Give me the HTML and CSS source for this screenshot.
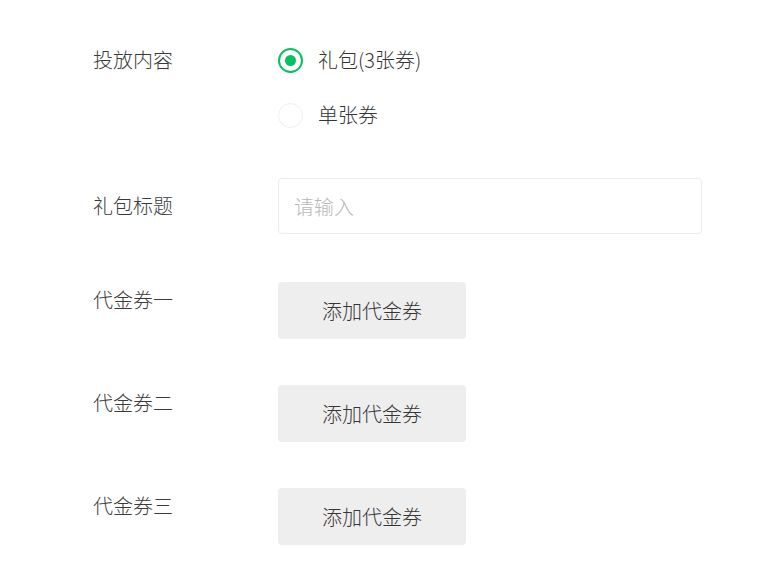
FILE: index.html
```html
<!DOCTYPE html>
<html lang="zh-CN">
<head>
<meta charset="utf-8">
<title>投放内容</title>
<link rel="stylesheet" href="styles.css">
</head>
<body>
<form class="form">
  <div class="row row-content">
    <div class="label">投放内容</div>
    <div class="control options">
      <label class="option">
        <span class="radio checked"></span>
        <span class="option-text">礼包(3张券)</span>
      </label>
      <label class="option">
        <span class="radio"></span>
        <span class="option-text">单张券</span>
      </label>
    </div>
  </div>
  <div class="row row-title">
    <div class="label">礼包标题</div>
    <div class="control">
      <div class="input"><span class="placeholder">请输入</span></div>
    </div>
  </div>
  <div class="row row-voucher">
    <div class="label label-top">代金券一</div>
    <div class="control"><div class="btn">添加代金券</div></div>
  </div>
  <div class="row row-voucher">
    <div class="label label-top">代金券二</div>
    <div class="control"><div class="btn">添加代金券</div></div>
  </div>
  <div class="row row-voucher">
    <div class="label label-top">代金券三</div>
    <div class="control"><div class="btn">添加代金券</div></div>
  </div>
</form>
</body>
</html>
```

FILE: styles.css
```css
html, body {
  margin: 0;
  padding: 0;
  background: #ffffff;
}
body {
  font-family: "Microsoft YaHei", "Noto Sans CJK SC", "Noto Sans", sans-serif;
  font-size: 20px;
  font-weight: 300;
  color: #353535;
}
.form {
  display: flex;
  flex-direction: column;
  padding: 46px 0 0 93px;
}
.row {
  display: flex;
  align-items: flex-start;
}
.label {
  width: 185px;
  flex: none;
  line-height: 28px;
  color: #3a3a3a;
}
.label-top {
  margin-top: 4px;
}
.control {
  display: flex;
}
.options {
  flex-direction: column;
  gap: 27px;
}
.option {
  display: flex;
  align-items: center;
  height: 28px;
}
.radio {
  box-sizing: border-box;
  width: 25px;
  height: 25px;
  border-radius: 50%;
  border: 1px solid #efefef;
  margin-right: 15px;
  display: flex;
  align-items: center;
  justify-content: center;
}
.radio.checked {
  border: 2px solid #07c160;
}
.radio.checked::after {
  content: "";
  width: 11px;
  height: 11px;
  border-radius: 50%;
  background: #07c160;
}
.option-text {
  line-height: 28px;
  color: #353535;
}
.row-title {
  margin-top: 49px;
  align-items: center;
}
.input {
  box-sizing: border-box;
  width: 424px;
  height: 56px;
  border: 1px solid #ececec;
  border-radius: 4px;
  padding: 0 15px;
  display: flex;
  align-items: center;
}
.placeholder {
  color: #b8b8b8;
}
.row-voucher {
  margin-top: 48px;
}
.row-voucher + .row-voucher {
  margin-top: 46px;
}
.btn {
  width: 188px;
  height: 57px;
  border-radius: 4px;
  background: #efeeef;
  display: flex;
  align-items: center;
  justify-content: center;
  color: #353535;
}
```
